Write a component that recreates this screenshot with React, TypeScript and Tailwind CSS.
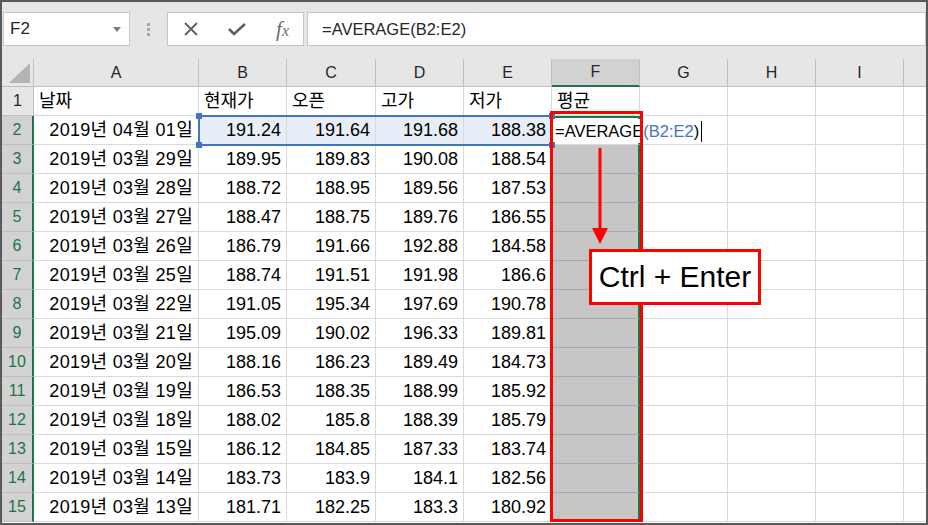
import React from "react";

const rows: [string, string, string, string, string][] = [
  ["2019년 04월 01일", "191.24", "191.64", "191.68", "188.38"],
  ["2019년 03월 29일", "189.95", "189.83", "190.08", "188.54"],
  ["2019년 03월 28일", "188.72", "188.95", "189.56", "187.53"],
  ["2019년 03월 27일", "188.47", "188.75", "189.76", "186.55"],
  ["2019년 03월 26일", "186.79", "191.66", "192.88", "184.58"],
  ["2019년 03월 25일", "188.74", "191.51", "191.98", "186.6"],
  ["2019년 03월 22일", "191.05", "195.34", "197.69", "190.78"],
  ["2019년 03월 21일", "195.09", "190.02", "196.33", "189.81"],
  ["2019년 03월 20일", "188.16", "186.23", "189.49", "184.73"],
  ["2019년 03월 19일", "186.53", "188.35", "188.99", "185.92"],
  ["2019년 03월 18일", "188.02", "185.8", "188.39", "185.79"],
  ["2019년 03월 15일", "186.12", "184.85", "187.33", "183.74"],
  ["2019년 03월 14일", "183.73", "183.9", "184.1", "182.56"],
  ["2019년 03월 13일", "181.71", "182.25", "183.3", "180.92"],
];

const cols = ["A", "B", "C", "D", "E", "F", "G", "H", "I"];

const cell = "border-r border-b border-[#d9d9d9] flex items-center px-[5px] whitespace-nowrap";
const colHead =
  "border-r border-b border-[#bfbfbf] flex items-center justify-center text-[16px] text-[#262626]";

export default function App() {
  return (
    <div
      className="relative w-[928px] h-[525px] border-2 border-[#595959] bg-[#e6e6e6] overflow-hidden flex flex-col"
      style={{ fontFamily: '"Liberation Sans", "Noto Sans CJK KR", sans-serif' }}
    >
      {/* toolbar */}
      <div className="h-[57px] flex items-start pt-[10px] pl-[1px] shrink-0">
        <div className="w-[127px] h-[34px] bg-white border border-[#c6c6c6] flex items-center justify-between pl-[6px] pr-[8px]">
          <span className="text-[17px] text-[#262626]">F2</span>
          <svg width="8" height="5" viewBox="0 0 8 5">
            <path d="M0 0h8L4 5z" fill="#7a7a7a" />
          </svg>
        </div>
        <div className="w-[37px] h-[34px] flex flex-col items-center justify-center gap-[2px]">
          <span className="w-[3px] h-[3px] bg-[#a8a8a8]" />
          <span className="w-[3px] h-[3px] bg-[#a8a8a8]" />
          <span className="w-[3px] h-[3px] bg-[#a8a8a8]" />
        </div>
        <div className="w-[137px] h-[34px] bg-white border border-[#c6c6c6] flex items-center justify-between pl-[16px] pr-[14px]">
          <svg width="14" height="14" viewBox="0 0 14 14">
            <path d="M1 1l12 12M13 1L1 13" stroke="#5f5f5f" strokeWidth="1.8" />
          </svg>
          <svg width="18" height="14" viewBox="0 0 18 14">
            <path d="M1 7l5 5L17 2" stroke="#5f5f5f" strokeWidth="2.6" fill="none" />
          </svg>
          <span
            className="italic text-[21px] text-[#6b6b6b] leading-none"
            style={{ fontFamily: '"Liberation Serif", serif' }}
          >
            f<span className="text-[16px]">x</span>
          </span>
        </div>
        <div className="flex-1 ml-[3px] h-[34px] bg-white border border-[#c6c6c6] flex items-center pl-[14px] text-[16.5px] text-[#262626]">
          =AVERAGE(B2:E2)
        </div>
      </div>

      {/* sheet */}
      <div className="grid grid-cols-[32px_165px_88px_89px_88px_88px_88px_88px_88px_88px_1fr] grid-rows-[28px] auto-rows-[29px] bg-white flex-1">
        <div className="border-r border-b border-[#bfbfbf] bg-[#e6e6e6] relative">
          <svg className="absolute left-[7px] top-[4px]" width="21" height="20" viewBox="0 0 21 20">
            <path d="M21 0V20H0z" fill="#b4b4b4" />
          </svg>
        </div>
        {cols.map((c) =>
          c === "F" ? (
            <div key={c} className={`${colHead} bg-[#d2d2d2] text-[#217346] border-b-2 border-b-[#217346]`}>
              {c}
            </div>
          ) : (
            <div key={c} className={`${colHead} bg-[#e6e6e6]`}>
              {c}
            </div>
          )
        )}
        <div className="border-b border-[#bfbfbf] bg-[#e6e6e6]" />

        {/* row 1 */}
        <div className="border-r border-b border-[#bfbfbf] bg-[#e6e6e6] flex items-center justify-center text-[16px] text-[#262626]">
          1
        </div>
        {["날짜", "현재가", "오픈", "고가", "저가", "평균", "", "", ""].map((t, i) => (
          <div key={i} className={`${cell} text-[18px] text-black`}>
            {t}
          </div>
        ))}
        <div className="border-b border-[#d9d9d9]" />

        {rows.map((r, ri) => (
          <React.Fragment key={ri}>
            <div className="border-r-2 border-r-[#217346] border-b border-b-[#bfbfbf] bg-[#d2d2d2] flex items-center justify-center text-[16px] text-[#217346]">
              {ri + 2}
            </div>
            <div className={`${cell} justify-end text-[18px] text-black tracking-[0.3px]`}>{r[0]}</div>
            {r.slice(1).map((v, vi) => (
              <div
                key={vi}
                className={`${cell} justify-end text-[18px] text-black ${ri === 0 ? "bg-[#e8eef7]" : ""}`}
              >
                {v}
              </div>
            ))}
            {ri === 0 ? (
              <div className="border-b border-[#d9d9d9] border-r-2 border-r-[#217346] border-t-2 border-t-[#217346] bg-white flex items-center relative z-10">
                <span className="bg-white whitespace-nowrap text-[16.5px] text-black pl-[3px] pr-[1px] flex items-center">
                  =AVERAGE<span className="text-[#4472c4]">(B2:E2</span>)
                  <span className="ml-[2px] w-[1px] h-[21px] bg-black" />
                </span>
              </div>
            ) : (
              <div className="bg-[#c6c6c6] border-b border-b-[#a8a8a8] border-r-2 border-r-[#217346]" />
            )}
            <div className={cell} />
            <div className={cell} />
            <div className={cell} />
            <div className="border-b border-[#d9d9d9]" />
          </React.Fragment>
        ))}
      </div>

      {/* reference highlight B2:E2 */}
      <div className="absolute left-[196px] top-[113px] w-[355px] h-[31px] border-2 border-[#4472c4] pointer-events-none z-20">
        <span className="absolute -left-[4px] -top-[4px] w-[6px] h-[6px] bg-[#4472c4]" />
        <span className="absolute -left-[4px] -bottom-[4px] w-[6px] h-[6px] bg-[#4472c4]" />
        <span className="absolute -right-[4px] -top-[4px] w-[6px] h-[6px] bg-[#4472c4]" />
        <span className="absolute -right-[4px] -bottom-[4px] w-[6px] h-[6px] bg-[#4472c4]" />
      </div>

      {/* red outline around F2:F15 */}
      <div className="absolute left-[548px] top-[109px] w-[93px] h-[411px] border-[3px] border-[#ff0000] pointer-events-none z-20" />

      {/* arrow */}
      <svg className="absolute left-[586px] top-[146px] z-20" width="24" height="98" viewBox="0 0 24 98">
        <path d="M12 0V82" stroke="#ff0000" strokeWidth="3" />
        <path d="M4 80h16L12 96z" fill="#ff0000" />
      </svg>

      {/* Ctrl + Enter label */}
      <div className="absolute left-[587px] top-[247px] w-[172px] h-[56px] border-[3px] border-[#ff0000] bg-white flex items-center justify-center z-20">
        <span className="text-[30px] text-black leading-none">Ctrl + Enter</span>
      </div>
    </div>
  );
}
